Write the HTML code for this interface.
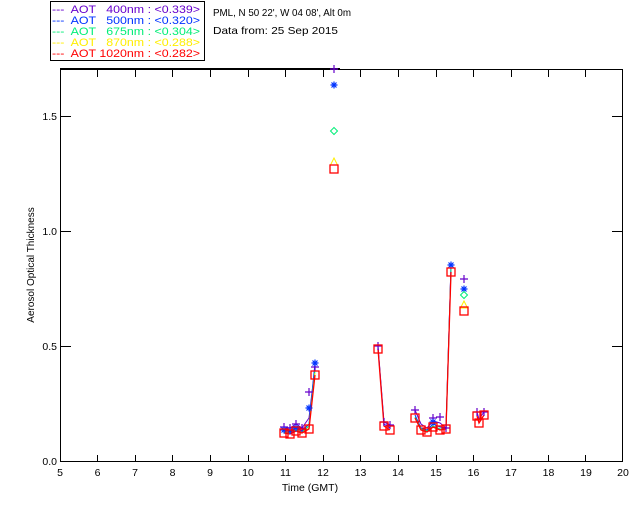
<!DOCTYPE html>
<html><head><meta charset="utf-8"><style>
html,body{margin:0;padding:0;background:#fff;}
svg{display:block;font-family:"Liberation Sans",sans-serif;}
</style></head><body>
<svg width="640" height="512" viewBox="0 0 640 512" xmlns="http://www.w3.org/2000/svg">
<defs>
<g id="pl"><path d="M-4 0H4M0 -4V4" stroke="#6600cc" stroke-width="1.2" fill="none"/></g>
<g id="st"><path d="M-3.5 0H3.5M0 -3.5V3.5M-2.5 -2.5L2.5 2.5M-2.5 2.5L2.5 -2.5" stroke="#0033ff" stroke-width="1.2" fill="none"/></g>
<g id="di"><path d="M0 -3.5L3.5 0L0 3.5L-3.5 0Z" stroke="#00ee77" stroke-width="1" fill="none"/></g>
<g id="tr"><path d="M0 -4L3.5 3H-3.5Z" stroke="#ffee00" stroke-width="1" fill="none"/></g>
<g id="sq"><rect x="-4" y="-4" width="8" height="8" stroke="#ff0000" stroke-width="1.3" fill="none"/></g>
</defs>
<rect x="50.5" y="1.5" width="154" height="59" fill="#fff" stroke="#000" stroke-width="1"/>
<g font-size="11">
<text x="52" y="13" fill="#6600cc" textLength="148" lengthAdjust="spacingAndGlyphs" xml:space="preserve">---  AOT   400nm : &lt;0.339&gt;</text>
<text x="52" y="24" fill="#0033ff" textLength="148" lengthAdjust="spacingAndGlyphs" xml:space="preserve">---  AOT   500nm : &lt;0.320&gt;</text>
<text x="52" y="35" fill="#00ee77" textLength="148" lengthAdjust="spacingAndGlyphs" xml:space="preserve">---  AOT   675nm : &lt;0.304&gt;</text>
<text x="52" y="46" fill="#ffee00" textLength="148" lengthAdjust="spacingAndGlyphs" xml:space="preserve">---  AOT   870nm : &lt;0.288&gt;</text>
<text x="52" y="57" fill="#ff0000" textLength="148" lengthAdjust="spacingAndGlyphs" xml:space="preserve">---  AOT 1020nm : &lt;0.282&gt;</text>
</g>
<text x="213" y="16" font-size="10.5" fill="#000" textLength="138" lengthAdjust="spacingAndGlyphs">PML, N 50 22', W 04 08', Alt 0m</text>
<text x="213" y="34" font-size="10.5" fill="#000" textLength="125" lengthAdjust="spacingAndGlyphs">Data from: 25 Sep 2015</text>
<line x1="60" y1="68.5" x2="340" y2="68.5" stroke="#000"/>
<rect x="60.5" y="69.5" width="562" height="392" fill="none" stroke="#000"/>
<g stroke="#000" stroke-width="1">
<path d="M97.5 462V455M135.5 462V455M172.5 462V455M210.5 462V455M248.5 462V455M285.5 462V455M323.5 462V455M360.5 462V455M398.5 462V455M436.5 462V455M473.5 462V455M511.5 462V455M548.5 462V455M585.5 462V455"/>
<path d="M97.5 70V77M135.5 70V77M172.5 70V77M210.5 70V77M248.5 70V77M285.5 70V77M323.5 70V77M360.5 70V77M398.5 70V77M436.5 70V77M473.5 70V77M511.5 70V77M548.5 70V77M585.5 70V77"/>
<path d="M61 346.5H71M61 231.5H71M61 116.5H71M622 346.5H612M622 231.5H612M622 116.5H612"/>
</g>
<g font-size="10.5" fill="#000" text-anchor="middle">
<text x="60" y="476">5</text><text x="97.5" y="476">6</text><text x="135" y="476">7</text><text x="172.5" y="476">8</text><text x="210" y="476">9</text><text x="248" y="476">10</text><text x="285.5" y="476">11</text><text x="323" y="476">12</text><text x="360.5" y="476">13</text><text x="398" y="476">14</text><text x="436" y="476">15</text><text x="473.5" y="476">16</text><text x="511" y="476">17</text><text x="548.5" y="476">18</text><text x="586" y="476">19</text><text x="623" y="476">20</text>
<text x="310" y="491">Time (GMT)</text>
</g>
<g font-size="10.5" fill="#000" text-anchor="end">
<text x="57" y="465">0.0</text><text x="57" y="350">0.5</text><text x="57" y="235">1.0</text><text x="57" y="120">1.5</text>
</g>
<text transform="translate(34,265) rotate(-90)" font-size="10" text-anchor="middle" fill="#000">Aerosol Optical Thickness</text>
<g fill="none" stroke-width="1">
<g stroke="#6600cc">
<polyline points="284,427 290,428 296,424 302,428 309,418 315,367"/>
<polyline points="378,346 384,422 390,425"/>
<polyline points="415,410 421,424 427,428 433,421 440,423 446,428 451,266"/>
<polyline points="477,412 479,419 484,412"/>
</g>
<g stroke="#0033ff">
<polyline points="284,430 290,431 296,428 302,431 309,424 315,363"/>
<polyline points="378,347 384,424 390,428"/>
<polyline points="415,415 421,428 427,430 433,424 440,427 446,428 451,265"/>
</g>
<g stroke="#00ee77"><polyline points="284,432 290,433 296,430 302,432 309,426 315,370"/>
<polyline points="415,417 421,429 427,431 433,426 440,429 446,429 451,269"/></g>
<g stroke="#ffee00"><polyline points="284,433 290,433 296,431 302,433 309,428 315,373"/></g>
<g stroke="#ff0000" stroke-width="1.3">
<polyline points="284,433 290,434 296,431 302,433 309,429 315,375"/>
<polyline points="378,349 384,426 390,430"/>
<polyline points="415,418 421,430 427,432 433,427 440,430 446,429 451,272"/>
<polyline points="477,416 479,423 484,415"/>
</g>
</g>
<g>
<use href="#pl" x="284" y="427"/><use href="#pl" x="290" y="428"/><use href="#pl" x="296" y="424"/><use href="#pl" x="302" y="428"/><use href="#pl" x="309" y="392"/><use href="#pl" x="315" y="367"/>
<use href="#st" x="284" y="430"/><use href="#st" x="290" y="431"/><use href="#st" x="296" y="428"/><use href="#st" x="309" y="408"/><use href="#st" x="315" y="363"/>
<use href="#pl" x="334" y="69"/><use href="#st" x="334" y="85"/><use href="#di" x="334" y="131"/><use href="#tr" x="334" y="162"/><use href="#sq" x="334" y="169"/>
<use href="#pl" x="378" y="346"/><use href="#pl" x="384" y="422"/><use href="#pl" x="390" y="425"/>
<use href="#pl" x="415" y="410"/><use href="#pl" x="433" y="418"/><use href="#pl" x="440" y="417"/><use href="#pl" x="446" y="428"/><use href="#st" x="451" y="265"/><use href="#st" x="433" y="422"/>
<use href="#pl" x="464" y="279"/><use href="#st" x="464" y="289"/><use href="#di" x="464" y="295"/><use href="#tr" x="464" y="305"/><use href="#sq" x="464" y="311"/>
<use href="#pl" x="477" y="412"/><use href="#pl" x="484" y="412"/>
<use href="#sq" x="284" y="433"/><use href="#sq" x="290" y="434"/><use href="#sq" x="296" y="431"/><use href="#sq" x="302" y="433"/><use href="#sq" x="309" y="429"/><use href="#sq" x="315" y="375"/>
<use href="#sq" x="378" y="349"/><use href="#sq" x="384" y="426"/><use href="#sq" x="390" y="430"/>
<use href="#sq" x="415" y="418"/><use href="#sq" x="421" y="430"/><use href="#sq" x="427" y="432"/><use href="#sq" x="433" y="427"/><use href="#sq" x="440" y="430"/><use href="#sq" x="446" y="429"/><use href="#sq" x="451" y="272"/>
<use href="#sq" x="477" y="416"/><use href="#sq" x="479" y="423"/><use href="#sq" x="484" y="415"/>
</g>
</svg>
</body></html>
